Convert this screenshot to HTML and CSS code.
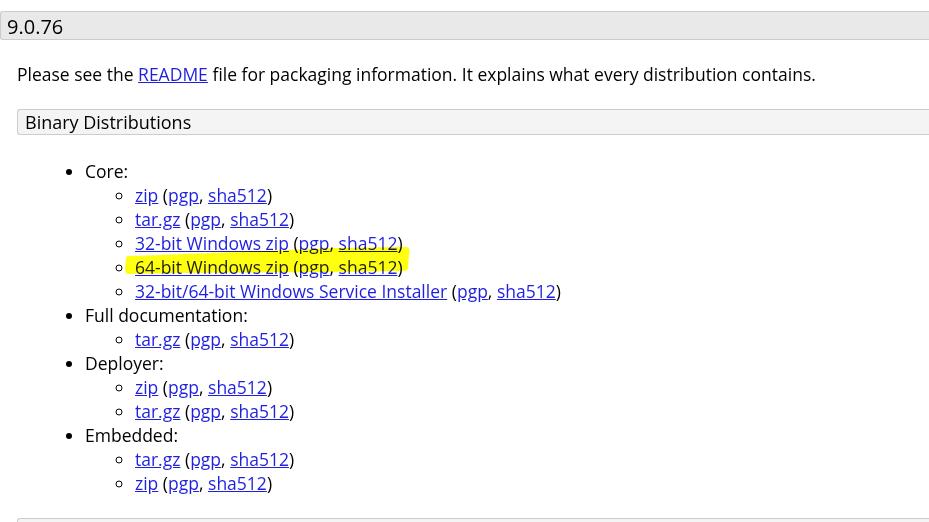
FILE: index.html
```html
<!DOCTYPE html>
<html>
<head>
<meta charset="utf-8">
<link rel="stylesheet" href="styles.css">
</head>
<body>
<h3 class="version">9.0.76</h3>
<div class="content">
  <p class="intro">Please see the <a href="#">README</a> file for packaging information. It explains what every distribution contains.</p>
  <h4 class="subhead">Binary Distributions</h4>
  <ul class="dist">
    <li>Core:
      <ul class="files">
        <li><a href="#">zip</a> (<a href="#">pgp</a>, <a href="#">sha512</a>)</li>
        <li><a href="#">tar.gz</a> (<a href="#">pgp</a>, <a href="#">sha512</a>)</li>
        <li><a href="#">32-bit Windows zip</a> (<a href="#">pgp</a>, <a href="#">sha512</a>)</li>
        <li class="marked"><a href="#">64-bit Windows zip</a> (<a href="#">pgp</a>, <a href="#">sha512</a>)<svg class="highlight" width="285" height="30" viewBox="0 0 285 30"><path d="M3 10 C40 9 120 6 210 2 L280 1 C285 1 285 4 284 8 L283 22 C283 25 280 25 276 25 L200 26 L60 27 L5 28 C1 28 0 26 0 23 L1 13 C1 11 2 10 3 10 Z" fill="#ffff10"/></svg></li>
        <li><a href="#">32-bit/64-bit Windows Service Installer</a> (<a href="#">pgp</a>, <a href="#">sha512</a>)</li>
      </ul>
    </li>
    <li>Full documentation:
      <ul class="files">
        <li><a href="#">tar.gz</a> (<a href="#">pgp</a>, <a href="#">sha512</a>)</li>
      </ul>
    </li>
    <li>Deployer:
      <ul class="files">
        <li><a href="#">zip</a> (<a href="#">pgp</a>, <a href="#">sha512</a>)</li>
        <li><a href="#">tar.gz</a> (<a href="#">pgp</a>, <a href="#">sha512</a>)</li>
      </ul>
    </li>
    <li>Embedded:
      <ul class="files">
        <li><a href="#">tar.gz</a> (<a href="#">pgp</a>, <a href="#">sha512</a>)</li>
        <li><a href="#">zip</a> (<a href="#">pgp</a>, <a href="#">sha512</a>)</li>
      </ul>
    </li>
  </ul>
  <div class="subhead"></div>
</div>
</body>
</html>
```

FILE: styles.css
```css
html, body {
  margin: 0;
  padding: 0;
  background: #fff;
}
body {
  font-family: "Open Sans", "Liberation Sans", sans-serif;
  font-size: 17.5px;
  line-height: 24px;
  color: #000;
  overflow: hidden;
  width: 929px;
  height: 522px;
}
a {
  color: #1f1fe0;
  text-decoration: underline;
}
.version {
  margin: 11px 0 0 0;
  height: 27px;
  line-height: 29px;
  padding: 0 6px;
  font-size: 20px;
  font-weight: 500;
  background: #e9e9e9;
  border: 1px solid #cccccc;
  border-right: none;
  border-radius: 3px 0 0 3px;
}
.content {
  padding-left: 17px;
}
.intro {
  margin: 22px 0 0 0;
}
.subhead {
  margin: 23px 0 0 0;
  height: 24px;
  line-height: 25px;
  padding: 0 7px;
  font-size: 18px;
  font-weight: 500;
  background: #f4f4f4;
  border: 1px solid #cccccc;
  border-right: none;
  border-radius: 3px 0 0 3px;
}
.dist {
  margin: 24px 0 0 0;
  padding-left: 68px;
  list-style: disc;
}
.files {
  margin: 0;
  padding-left: 50px;
  list-style: circle;
}
.dist + .subhead {
  margin-top: 23px;
}
.marked {
  position: relative;
}
.highlight {
  position: absolute;
  left: -10px;
  top: -9px;
  mix-blend-mode: multiply;
  pointer-events: none;
}
```
